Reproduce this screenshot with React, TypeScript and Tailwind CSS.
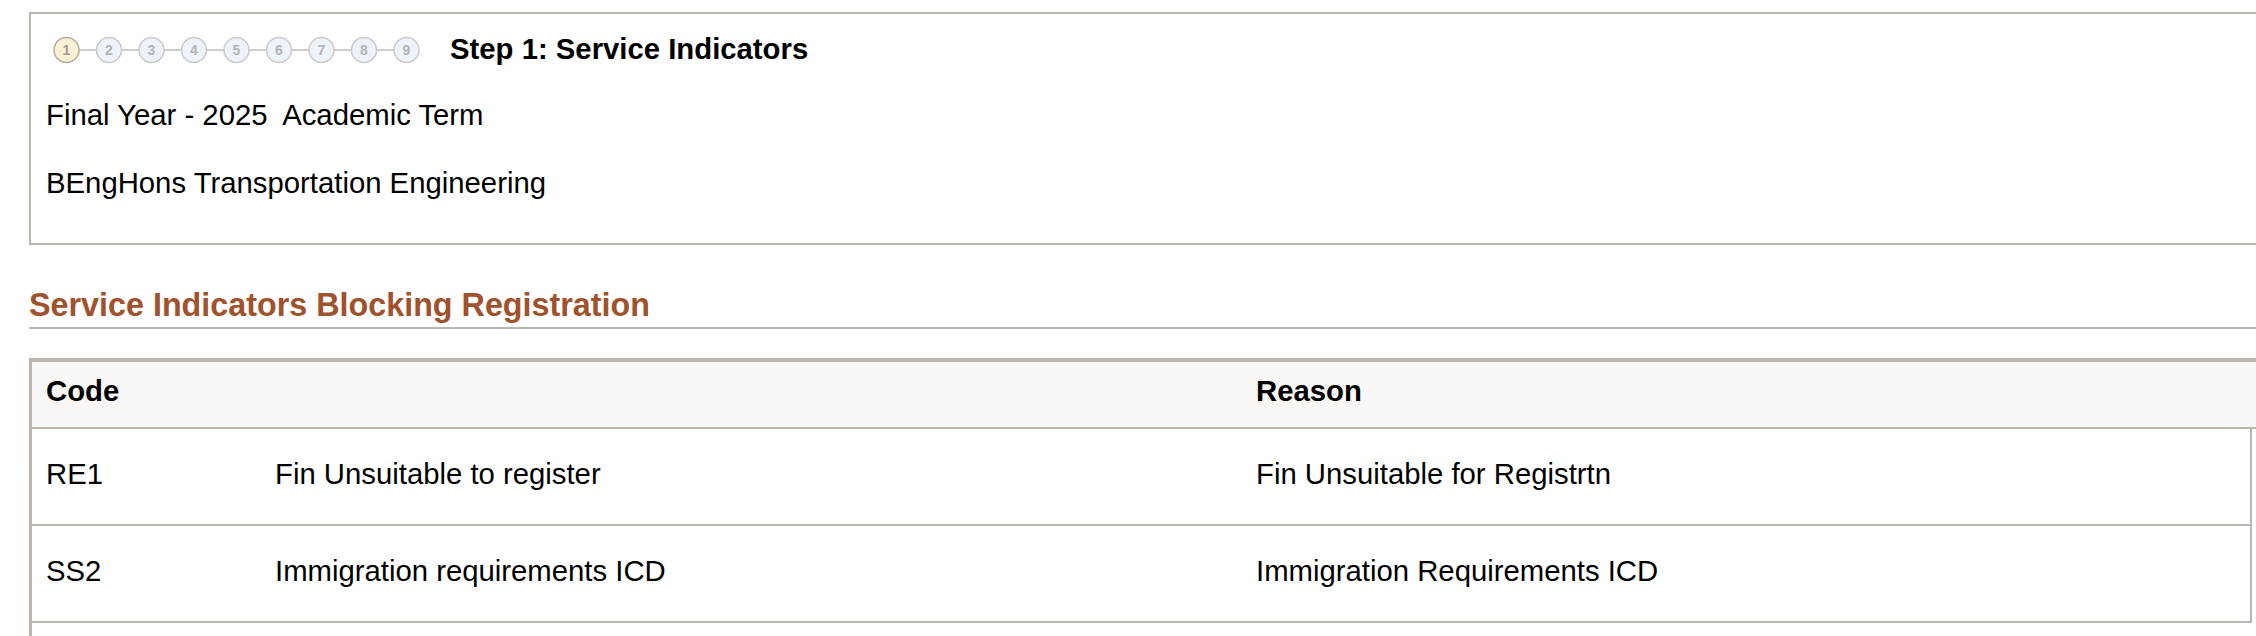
import React from 'react';

const steps = [1, 2, 3, 4, 5, 6, 7, 8, 9];

const rows = [
  { code: 'RE1', desc: 'Fin Unsuitable to register', reason: 'Fin Unsuitable for Registrtn' },
  { code: 'SS2', desc: 'Immigration requirements ICD', reason: 'Immigration Requirements ICD' },
];

function StepTrail() {
  return (
    <svg width="368" height="30" viewBox="0 0 368 30" className="shrink-0">
      {steps.slice(0, -1).map((s, i) => (
        <line key={s} x1={26 + i * 42.5} y1="15" x2={43.5 + i * 42.5} y2="15" stroke="#bdbdbd" strokeWidth="1.5" />
      ))}
      {steps.map((s, i) => (
        <g key={s}>
          <circle
            cx={13.5 + i * 42.5}
            cy="15"
            r="12.5"
            fill={i === 0 ? '#fdf0d4' : '#eef2fb'}
            stroke={i === 0 ? '#b3ac9e' : '#cacaca'}
            strokeWidth="1.5"
          />
          <text
            x={13.5 + i * 42.5}
            y="20"
            textAnchor="middle"
            fontSize="14"
            fontWeight="bold"
            fontFamily="Liberation Sans, Arial, sans-serif"
            fill={i === 0 ? '#9a9a9a' : '#b4b4b4'}
          >
            {s}
          </text>
        </g>
      ))}
    </svg>
  );
}

export default function App() {
  return (
    <div className="h-[636px] w-full overflow-hidden bg-white font-['Liberation_Sans',Arial,sans-serif] text-[29.3px] text-black">
      {/* page header box */}
      <div className="ml-[29px] mt-[12px] w-[2300px] border-2 border-[#bbb6b0] pl-[15px] pt-[22px] pb-[43px]">
        <div className="flex h-[28px] items-center">
          <div className="ml-[7px]">
            <StepTrail />
          </div>
          <span className="ml-[29px] -mt-[2px] font-bold leading-[34px]">Step 1: Service Indicators</span>
        </div>
        <div className="mt-[34px] leading-[34px]">Final Year - 2025&nbsp; Academic Term</div>
        <div className="mt-[34px] leading-[34px]">BEngHons Transportation Engineering</div>
      </div>

      {/* section heading */}
      <div className="ml-[29px] mt-[41px] w-[2300px] border-b-2 border-[#bbb6b0] pb-[3px]">
        <h2 className="text-[32.3px] font-bold leading-[38px] text-[#a0522d]">Service Indicators Blocking Registration</h2>
      </div>

      {/* indicators table */}
      <div className="ml-[29px] mt-[29px] w-[2300px] border-l-[3px] border-t-4 border-[#bbb6b0]">
        <div className="flex h-[67px] border-b-2 border-[#bbb6b0] bg-[#f8f7f5] pt-[12px] font-bold leading-[34px]">
          <div className="w-[1210px] pl-[14px]">Code</div>
          <div className="pl-[14px]">Reason</div>
        </div>
        {rows.map((r) => (
          <div
            key={r.code}
            className="flex h-[97px] w-[2220px] border-b-2 border-r-2 border-[#bbb6b0] pt-[28px] leading-[34px]"
          >
            <div className="w-[229px] pl-[14px]">{r.code}</div>
            <div className="w-[981px] pl-[14px]">{r.desc}</div>
            <div className="pl-[14px]">{r.reason}</div>
          </div>
        ))}
        <div className="h-[30px]" />
      </div>
    </div>
  );
}
